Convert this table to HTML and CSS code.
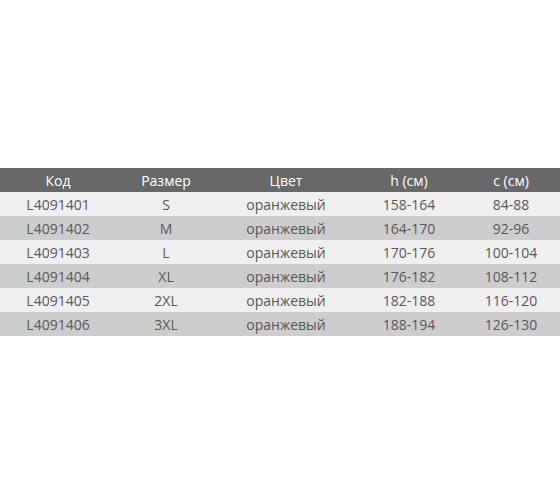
FILE: index.html
```html
<!DOCTYPE html>
<html lang="ru">
<head>
<meta charset="utf-8">
<link rel="stylesheet" href="styles.css">
</head>
<body>
<div class="page">
  <div class="table">
    <div class="row head"><div>Код</div><div>Размер</div><div>Цвет</div><div>h (см)</div><div>c (см)</div></div>
    <div class="row light"><div>L4091401</div><div>S</div><div>оранжевый</div><div>158-164</div><div>84-88</div></div>
    <div class="row dark"><div>L4091402</div><div>M</div><div>оранжевый</div><div>164-170</div><div>92-96</div></div>
    <div class="row light"><div>L4091403</div><div>L</div><div>оранжевый</div><div>170-176</div><div>100-104</div></div>
    <div class="row dark"><div>L4091404</div><div>XL</div><div>оранжевый</div><div>176-182</div><div>108-112</div></div>
    <div class="row light"><div>L4091405</div><div>2XL</div><div>оранжевый</div><div>182-188</div><div>116-120</div></div>
    <div class="row dark"><div>L4091406</div><div>3XL</div><div>оранжевый</div><div>188-194</div><div>126-130</div></div>
  </div>
</div>
</body>
</html>
```
FILE: styles.css
```css
html, body {
  margin: 0;
  padding: 0;
  background: #ffffff;
}
.page {
  width: 560px;
  height: 504px;
  padding-top: 168px;
  box-sizing: border-box;
  font-family: "Open Sans", "DejaVu Sans", sans-serif;
  font-size: 14px;
}
.table {
  display: flex;
  flex-direction: column;
}
.row {
  display: grid;
  grid-template-columns: 116px 100px 140px 106px 98px;
  height: 24px;
  align-items: center;
  text-align: center;
  color: #585858;
}
.head {
  background: #686868;
  color: #ffffff;
}
.light {
  background: #efefef;
}
.dark {
  background: #cdcdcd;
}
```
